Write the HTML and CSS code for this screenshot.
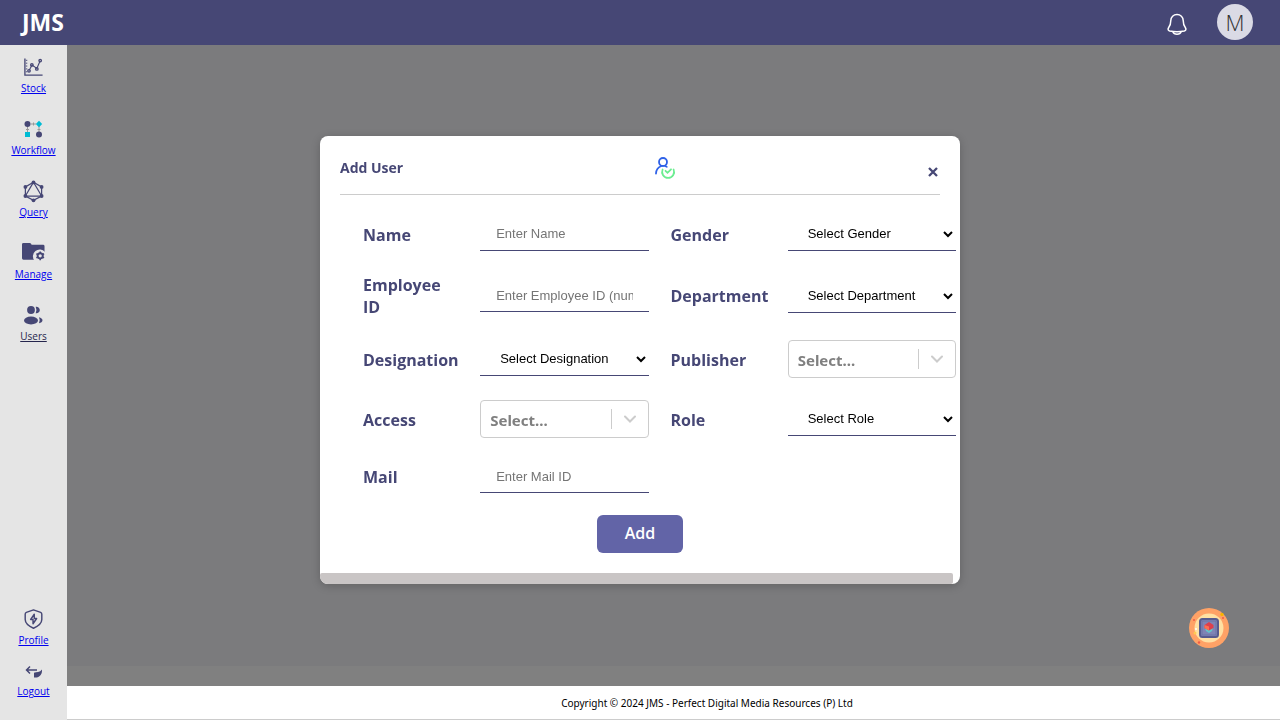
FILE: index.html
```html
<!DOCTYPE html>
<html lang="en">
<head>
<meta charset="utf-8">
<meta name="viewport" content="width=device-width, initial-scale=1">
<title>JMS</title>
<link rel="stylesheet" href="styles.css">
</head>
<body>
<div class="app">
  <header class="topbar">
    <h1 class="brand">JMS</h1>
    <div class="topbar-actions">
      <button class="icon-button" type="button" aria-label="Notifications">
        <svg width="22" height="24" viewBox="0 0 22 24" fill="none" stroke="#fff" stroke-width="1.5" stroke-linejoin="round">
          <path d="M11 2.500C7.500 2.500 4.800 5 4.800 8.500c0 4-.6 5-2.100 7-1.200 1.800-.6 3 1 3.400 4.500 1 10.100 1 14.600 0 1.600-.4 2.200-1.600 1-3.400-1.500-2-2.100-3-2.100-7 0-3.500-2.700-6-6.200-6z"/>
          <path d="M6.800 19.500c.6 1.700 2.200 2.700 4.200 2.700s3.600-1 4.200-2.700"/>
        </svg>
      </button>
      <button class="avatar" type="button" aria-label="Account">M</button>
    </div>
  </header>
  <div class="body">
    <nav class="sidebar">
      <div class="nav-group">
        <a class="nav-link" href="#stock">
          <svg width="21" height="22" viewBox="0 0 22 22" fill="none" stroke="#464775" stroke-width="1.400">
            <path d="M2 2v17.500h18.500"/><path d="M3 4h1.500M3 7h1.500M3 10h1.500M3 13h1.500M3 16h1.500" stroke-width="1"/>
            <path d="M6.500 14.500L9.500 9l5 3.500 3.500-8" stroke-width="1.200"/>
            <circle cx="6.300" cy="15" r="1.300"/><circle cx="9.300" cy="8.800" r="1.300"/><circle cx="14.500" cy="13" r="1.300"/><circle cx="18" cy="4.300" r="1.300"/>
          </svg>
          <span>Stock</span>
        </a>
        <a class="nav-link" href="#workflow">
          <svg width="21" height="22" viewBox="0 0 21 22">
            <path d="M4.500 8v7M3 11.500h3M8 6h5M10.500 4.500v3M16 8v7M14.500 11.500h3" stroke="#999" stroke-width="1"/>
            <circle cx="4.500" cy="6" r="3" fill="#464775"/><path d="M16 2.800l3.200 3.200-3.200 3.200L12.800 6z" fill="#00bcd4"/>
            <path d="M2 14h5v5H2z" fill="#00bcd4"/><circle cx="16" cy="16.500" r="3" fill="#464775"/>
          </svg>
          <span>Workflow</span>
        </a>
        <a class="nav-link" href="#query">
          <svg width="21" height="24" viewBox="0 0 22 24" fill="none" stroke="#464775" stroke-width="1.300">
            <path d="M11 1.700l8.500 5v9.500L11 20.700 2.500 16.200V6.700z"/><path d="M11 1.700L2.500 16.200h17z"/>
            <g fill="#464775" stroke="none"><circle cx="11" cy="2" r="2"/><circle cx="19.500" cy="6.700" r="2"/><circle cx="19.500" cy="16.200" r="2"/><circle cx="11" cy="20.700" r="2"/><circle cx="2.500" cy="16.200" r="2"/><circle cx="2.500" cy="6.700" r="2"/></g>
          </svg>
          <span>Query</span>
        </a>
        <a class="nav-link" href="#manage">
          <svg width="23" height="20" viewBox="0 0 24 20">
            <path d="M0 2q0-1.500 1.500-1.500H8q1 0 1.500 1l.5 1h12q1.500 0 1.500 1.500v14H1.500Q0 18 0 16.500z" fill="#464775"/>
            <path d="M13 19a6.500 6.500 0 0 1 11-9v9z" fill="#e5e5e5"/>
            <circle cx="19" cy="14" r="2.700" fill="none" stroke="#464775" stroke-width="2"/>
            <path d="M19 9.500v2M19 16.500v2M15 11.800l1.800 1M21.200 15.200l1.800 1M15 16.200l1.800-1M21.200 12.800l1.800-1" stroke="#464775" stroke-width="1.600"/>
          </svg>
          <span>Manage</span>
        </a>
        <a class="nav-link nav-link-visited" href="#users">
          <svg width="21" height="24" viewBox="0 0 21 24" fill="#464775">
            <circle cx="8" cy="6" r="3.900"/><ellipse cx="8" cy="16.500" rx="7" ry="3.900"/>
            <path d="M12.700 2.800a3.300 3.300 0 1 1 0 6.400q1.500-3.200 0-6.400zM16 13.300c2 .4 3.500 1.600 3.500 3s-1.500 2.700-3.500 3q1.500-3 0-6z"/>
          </svg>
          <span>Users</span>
        </a>
      </div>
      <div class="nav-group nav-group-end">
        <a class="nav-link" href="#profile">
          <svg width="21" height="22" viewBox="0 0 22 22" fill="none" stroke="#464775" stroke-width="1.500" stroke-linejoin="round">
            <path d="M11 1.500l7.500 2.500q1.200.5 1.200 2v5.500c0 4-4 7-8.700 9.200C6.300 18.500 2.300 15.500 2.300 11.500V6q0-1.500 1.200-2z"/>
            <path d="M11.800 6l-3.800 5.500h2.500v4.500l3.800-5.500h-2.500z"/>
          </svg>
          <span>Profile</span>
        </a>
        <a class="nav-link nav-link-short" href="#logout">
          <svg width="17" height="14" viewBox="0 0 17 14">
            <path d="M12 5H1.500M5 1.500L1.500 5 5 8.500" fill="none" stroke="#464775" stroke-width="1.500"/>
            <path d="M17 4.500c.3 5-2.500 8.500-8 8V7.700q2-.7 4-.7 2.500-.2 4-2.500z" fill="#464775"/>
          </svg>
          <span>Logout</span>
        </a>
      </div>
    </nav>
    <div class="content">
      <main class="workspace"></main>
      <footer class="footer">Copyright © 2024 JMS - Perfect Digital Media Resources (P) Ltd</footer>
    </div>
  </div>
</div>

<div class="overlay">
  <section class="modal" role="dialog" aria-labelledby="modal-title">
    <div class="modal-header">
      <h2 class="modal-title" id="modal-title">Add User</h2>
      <svg width="22" height="24" viewBox="0 0 22 24" fill="none" stroke-width="1.800" stroke-linecap="round">
        <g stroke="#2f62e8"><circle cx="9" cy="6" r="4"/><path d="M2 17.500c.2-3.500 2.300-6.500 5.500-7.500M11 10l1.700.8"/></g>
        <g stroke="#6ced91"><path d="M8.600 13.500a6 6 0 1 0 11 0"/><path d="M11.500 14.800l2 2 3.500-3.500"/></g>
      </svg>
      <button class="close" type="button" aria-label="Close">
        <svg width="10" height="10" viewBox="0 0 10 10"><path d="M1 1l8 8M9 1L1 9" stroke="#464775" stroke-width="2.300"/></svg>
      </button>
    </div>
    <form class="form">
      <label for="name">Name</label>
      <input class="field" id="name" type="text" placeholder="Enter Name">
      <label for="gender">Gender</label>
      <select class="field" id="gender"><option>Select Gender</option></select>

      <label for="employee">Employee ID</label>
      <input class="field" id="employee" type="text" placeholder="Enter Employee ID (numbers only)">
      <label for="department">Department</label>
      <select class="field" id="department"><option>Select Department</option></select>

      <label for="designation">Designation</label>
      <select class="field" id="designation"><option>Select Designation</option></select>
      <label for="publisher">Publisher</label>
      <div class="combo">
        <select id="publisher"><option>Select...</option></select>
        <span class="combo-arrow"><svg width="12" height="8" viewBox="0 0 12 8"><path d="M1 1.500l5 5 5-5" fill="none" stroke="#ccc" stroke-width="2" stroke-linecap="round"/></svg></span>
      </div>

      <label for="access">Access</label>
      <div class="combo">
        <select id="access"><option>Select...</option></select>
        <span class="combo-arrow"><svg width="12" height="8" viewBox="0 0 12 8"><path d="M1 1.500l5 5 5-5" fill="none" stroke="#ccc" stroke-width="2" stroke-linecap="round"/></svg></span>
      </div>
      <label for="role">Role</label>
      <select class="field" id="role"><option>Select Role</option></select>

      <label for="mail">Mail</label>
      <input class="field" id="mail" type="email" placeholder="Enter Mail ID">
      <div class="form-actions"><button class="submit" type="submit">Add</button></div>
    </form>
    <div class="scroll-track"><div class="scroll-thumb"></div></div>
  </section>
</div>

<button class="assistant" type="button" aria-label="Assistant">
  <svg width="40" height="40" viewBox="0 0 40 40">
    <circle cx="20" cy="20" r="20" fill="#ffa266"/><circle cx="20" cy="20" r="14.500" fill="#ffe0a3"/>
    <rect x="11" y="11" width="18" height="18" rx="2.500" fill="#7f84b5" stroke="#575b8f" stroke-width="2"/>
    <path d="M13 13h14v14H13z" fill="none" stroke="#6d72a5"/>
    <path d="M16 20h8l-1 3-3 2-3-2z" fill="#62c5c9"/><path d="M15.500 17l4.500-3 4.500 3v3L20 22.500 15.500 20z" fill="#dd3f4d"/><path d="M15.500 17l4.500 1.500v4L15.500 20z" fill="#ff6c50"/>
    <circle cx="33" cy="6.500" r="1.700" fill="#f9b500"/><circle cx="6" cy="25" r="1.500" fill="#ffca54"/><circle cx="7" cy="21" r="1" fill="#fff"/>
    <circle cx="5" cy="12" r="1" fill="#f25b46"/><circle cx="34" cy="10" r="1" fill="#f25b46"/><circle cx="10" cy="34.500" r="1.200" fill="#f25b46"/>
  </svg>
</button>
</body>
</html>
```

FILE: styles.css
```css
* { box-sizing: border-box; }

body {
  margin: 0;
  font-family: "Open Sans", "Noto Sans", sans-serif;
}

svg { display: block; flex: none; }

.app {
  display: flex;
  flex-direction: column;
  min-height: 100vh;
}

.topbar {
  display: flex;
  align-items: center;
  justify-content: space-between;
  height: 45px;
  padding: 0 27px 2px 22px;
  background: #464775;
}

.brand {
  margin: 0;
  color: #fff;
  font-family: "Noto Sans", sans-serif;
  font-size: 23px;
  font-weight: 700;
  line-height: 42px;
}

.topbar-actions {
  display: flex;
  align-items: center;
  gap: 29px;
}

.icon-button,
.close,
.assistant {
  padding: 0;
  border: 0;
  background: none;
}

.icon-button { padding-top: 4px; }

.avatar {
  width: 36px;
  height: 36px;
  padding: 0;
  border: 0;
  border-radius: 50%;
  background: #dadae5;
  color: #333;
  font-family: "Open Sans", sans-serif;
  font-size: 22px;
  font-weight: 300;
  line-height: 36px;
}

.body {
  display: flex;
  flex: 1;
}

.sidebar {
  display: flex;
  flex-direction: column;
  justify-content: space-between;
  flex: none;
  width: 67px;
  padding: 11px 0 21px;
  background: #e5e5e5;
}

.nav-group {
  display: flex;
  flex-direction: column;
  gap: 22px;
}

.nav-group-end { gap: 17px; }

.nav-link {
  display: flex;
  flex-direction: column;
  align-items: center;
  justify-content: space-between;
  height: 40px;
  color: #00e;
  font-size: 10px;
  line-height: 16px;
  text-decoration: underline;
}

.nav-link-short { height: 34px; }

.nav-link-visited { color: #25254d; }

.content {
  display: flex;
  flex: 1;
  flex-direction: column;
  min-width: 0;
}

.workspace {
  flex: 1;
  border-bottom: 20px solid #808080;
  background: #7b7b7d;
}

.footer {
  padding: 9px 0 8px 67px;
  border-bottom: 1px solid #ccc;
  background: #fff;
  color: #000;
  font-family: "Noto Sans", sans-serif;
  font-size: 10px;
  line-height: 16px;
  text-align: center;
}

.overlay {
  position: fixed;
  inset: 0;
  display: flex;
  align-items: center;
  justify-content: center;
}

.modal {
  width: 50%;
  min-width: 560px;
  overflow: hidden;
  border-radius: 8px;
  background: #fff;
  box-shadow: 0 2px 10px rgba(0, 0, 0, 0.2);
  color: #464775;
}

.modal-header {
  display: grid;
  grid-template-columns: 1fr auto 1fr;
  align-items: center;
  margin: 0 20px;
  padding: 20px 0 14px;
  border-bottom: 1px solid #ccc;
}

.modal-header > svg { margin-left: 50px; }

.modal-title {
  margin: 0;
  font-size: 14px;
  font-weight: 700;
  line-height: 24px;
}

.close {
  justify-self: end;
  padding: 8px 2px 0;
}

.form {
  display: grid;
  grid-template-columns: minmax(0, 95fr) minmax(0, 168fr) minmax(0, 95fr) minmax(0, 168fr);
  gap: 22px;
  align-items: center;
  padding: 22px 4px 20px 43px;
}

.form label {
  padding-top: 1px;
  font-size: 16px;
  font-weight: 700;
  line-height: 22px;
}

.field {
  width: 100%;
  height: 33px;
  padding: 0 16px;
  border: 0;
  border-bottom: 1px solid #464775;
  border-radius: 0;
  background: #fff;
  color: #000;
  font-family: "Liberation Sans", Arial, sans-serif;
  font-size: 13px;
}

.field::placeholder { color: #757575; }

select.field {
  height: 34px;
  padding-right: 0;
}

.combo {
  display: grid;
  grid-template-columns: 1fr auto;
  align-items: center;
  height: 38px;
  border: 1px solid #ccc;
  border-radius: 4px;
}

.combo select {
  min-width: 0;
  padding: 2px 9px 0;
  border: 0;
  appearance: none;
  background: none;
  color: #808080;
  font-family: "Noto Sans", sans-serif;
  font-size: 15px;
  font-weight: 700;
}

.combo-arrow {
  display: flex;
  align-items: center;
  height: 20px;
  padding: 0 12px;
  border-left: 1px solid #ccc;
}

.form-actions {
  grid-column: 1 / -1;
  padding-right: 39px;
  text-align: center;
}

.submit {
  width: 86px;
  height: 38px;
  padding: 0 0 2px;
  border: 0;
  border-radius: 6px;
  background: #6264a7;
  color: #fff;
  font-family: "Open Sans", sans-serif;
  font-size: 16px;
  font-weight: 600;
}

.form-actions .submit { display: inline-block; vertical-align: top; }

.scroll-track {
  height: 11px;
  padding-right: 7px;
}

.scroll-thumb {
  height: 100%;
  border-radius: 2px;
  background: #c9c5c5;
}

.assistant {
  position: fixed;
  right: 51px;
  bottom: 72px;
}
```
